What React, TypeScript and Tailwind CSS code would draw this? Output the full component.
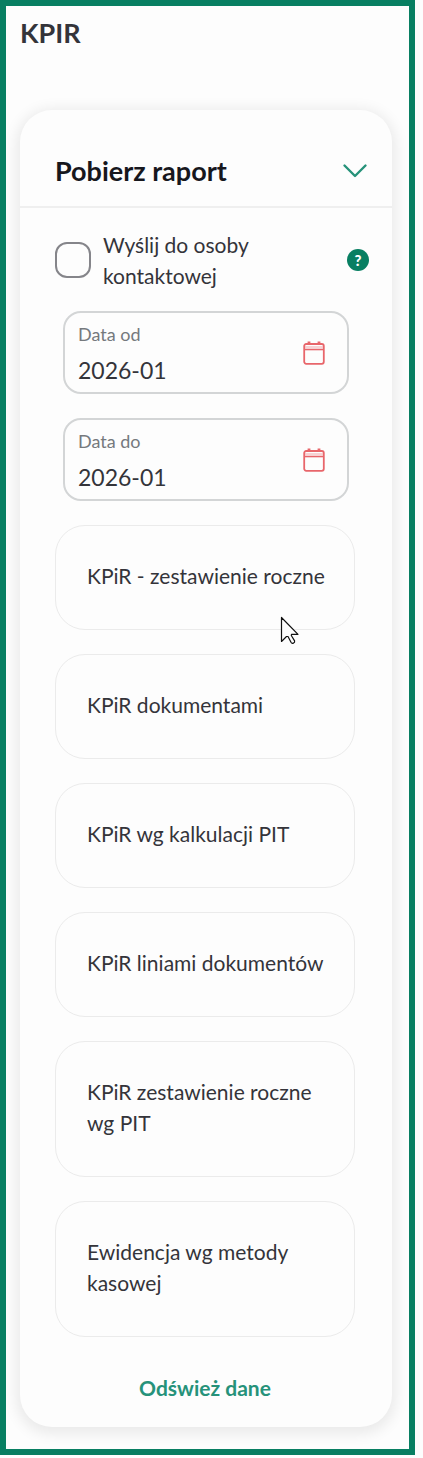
import { useState } from "react"

const reports = [
  "KPiR - zestawienie roczne",
  "KPiR dokumentami",
  "KPiR wg kalkulacji PIT",
  "KPiR liniami dokumentów",
  "KPiR zestawienie roczne wg PIT",
  "Ewidencja wg metody kasowej",
]

function CalendarIcon() {
  return (
    <svg width="22" height="24" viewBox="0 0 22 24" fill="none" stroke="#e8666b">
      <rect x="1.2" y="3" width="19.6" height="19.8" rx="2" strokeWidth="1.8" />
      <path d="M2 8.5h18" strokeWidth="1.6" />
      <path d="M2 6h18" strokeWidth="1.4" opacity="0.4" />
      <path d="M6 0.5v3M16 0.5v3" strokeWidth="2.8" />
    </svg>
  )
}

function Cursor() {
  return (
    <svg
      className="pointer-events-none absolute right-[55px] top-[91px]"
      width="20"
      height="30"
      viewBox="0 0 20 30"
      fill="#fdfdfd"
      stroke="#111"
      strokeWidth="1.2"
      strokeLinejoin="round"
    >
      <path d="M1.5 1.5v24l5-5h1.5l3 5.8c1 1.8 4.2.8 3.6-1.4l-3.3-5.4.2-1.2h6.5z" />
    </svg>
  )
}

type DateFieldProps = {
  id: string
  label: string
  value: string
  onChange: (value: string) => void
}

function DateField({ id, label, value, onChange }: DateFieldProps) {
  return (
    <div className="ml-2 mr-[6px] flex h-[83px] items-center rounded-[18px] border-2 border-[#d3d5d6] pl-[13px] pr-[22px]">
      <div className="min-w-0 flex-1 pt-[5px]">
        <label htmlFor={id} className="block text-[18px] leading-[30px] text-[#75797d]">
          {label}
        </label>
        <input
          id={id}
          type="text"
          value={value}
          onChange={(e) => onChange(e.target.value)}
          className="block h-[42px] w-full bg-transparent text-[23px] text-[#34343a] outline-none"
        />
      </div>
      <button type="button" aria-label={`Wybierz datę: ${label}`}>
        <CalendarIcon />
      </button>
    </div>
  )
}

export default function App() {
  const [open, setOpen] = useState(true)
  const [send, setSend] = useState(false)
  const [from, setFrom] = useState("2026-01")
  const [to, setTo] = useState("2026-01")

  return (
    <div className="bg-[#fdfdfd] pb-[3px] pr-2 font-['Lato',sans-serif] text-[21px] leading-[31px] text-[#34343a]">
      <main className="border-[6px] border-[#087f62] pb-[22px] pl-[14px] pr-[17px] pt-[11px]">
        <h1 className="text-[27px] font-bold leading-8">KPIR</h1>

        <section className="mt-[61px] rounded-[32px] bg-[#fdfdfd] shadow-[0_3px_14px_4px_rgba(0,0,0,0.08)]">
          <h2 className="border-b-2 border-[#efefef]">
            <button
              type="button"
              aria-expanded={open}
              onClick={() => setOpen(!open)}
              className="flex w-full items-center justify-between pb-5 pl-[35px] pr-[24px] pt-[45px] text-left text-[27px] font-bold text-[#17171d]"
            >
              Pobierz raport
              <svg width="26" height="16" viewBox="0 0 26 16" fill="none" stroke="#26927a" strokeWidth="2.4" strokeLinecap="round" strokeLinejoin="round">
                <path d="M2.5 2.5 13 13 23.5 2.5" />
              </svg>
            </button>
          </h2>

          {open && (
            <div className="pb-6 pl-[35px] pr-[37px] pt-[21px]">
              <div className="-mr-[14px] flex items-center justify-between">
                <div className="flex items-center gap-3">
                  <input
                    id="send"
                    type="checkbox"
                    checked={send}
                    onChange={(e) => setSend(e.target.checked)}
                    className="size-9 shrink-0 appearance-none rounded-[12px] border-2 border-[#85858a] checked:bg-[#087f62]"
                  />
                  <label htmlFor="send" className="w-[170px]">
                    Wyślij do osoby kontaktowej
                  </label>
                </div>
                <button
                  type="button"
                  aria-label="Pomoc"
                  className="size-[22px] rounded-full bg-[#087f62] text-center text-[15px] font-black leading-[22px] text-white"
                >
                  ?
                </button>
              </div>

              <div className="mt-5 flex flex-col gap-6">
                <DateField id="date-from" label="Data od" value={from} onChange={setFrom} />
                <DateField id="date-to" label="Data do" value={to} onChange={setTo} />

                <div className="relative flex flex-col gap-6">
                  {reports.map((name) => (
                    <button
                      key={name}
                      type="button"
                      className="rounded-[30px] border border-[#ebebeb] pb-[38px] pl-[31px] pr-5 pt-[34px] text-left"
                    >
                      {name}
                    </button>
                  ))}
                  <Cursor />
                </div>
              </div>

              <button type="button" className="mt-[35px] block w-full text-center font-bold text-[#26927a]">
                Odśwież dane
              </button>
            </div>
          )}
        </section>
      </main>
    </div>
  )
}
